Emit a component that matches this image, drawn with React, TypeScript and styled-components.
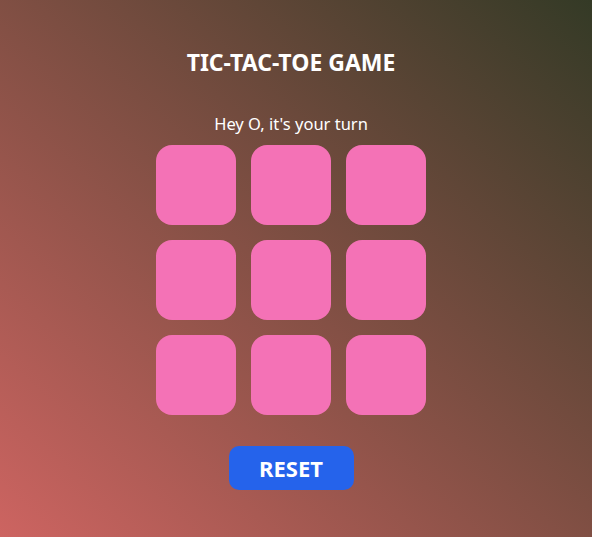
import React, { useState } from "react";
import styled, { createGlobalStyle } from "styled-components";

const Global = createGlobalStyle`
  html, body { margin: 0; padding: 0; }
  body {
    font-family: "Segoe UI", "Noto Sans", "Open Sans", sans-serif;
    color: #ffffff;
  }
`;

const Page = styled.div`
  min-height: 100vh;
  box-sizing: border-box;
  background: linear-gradient(to top right, #cd6461, #343a26);
  display: flex;
  flex-direction: column;
  align-items: center;
  padding: 47px 10px 0 0;
`;

const Title = styled.h1`
  margin: 0;
  font-size: 23px;
  font-weight: 700;
  line-height: 30px;
`;

const Status = styled.p`
  margin: 36px 0 10px;
  font-size: 16.5px;
  line-height: 22px;
`;

const Board = styled.div`
  display: grid;
  grid-template-columns: repeat(3, 80px);
  grid-auto-rows: 80px;
  gap: 15px;
`;

const Cell = styled.button`
  border: none;
  padding: 0;
  border-radius: 16px;
  background: #f472b6;
  color: #fff;
  font-size: 40px;
  font-weight: 700;
  cursor: pointer;
`;

const Reset = styled.button`
  margin-top: 31px;
  width: 125px;
  height: 44px;
  border: none;
  border-radius: 10px;
  background: #2563eb;
  color: #fff;
  font-family: inherit;
  font-size: 22px;
  font-weight: 700;
  padding: 0;
  cursor: pointer;
`;

export default function App() {
  const [cells, setCells] = useState<string[]>(Array(9).fill(""));
  const [turn, setTurn] = useState<"O" | "X">("O");
  const play = (i: number) => {
    if (cells[i]) return;
    const n = [...cells];
    n[i] = turn;
    setCells(n);
    setTurn(turn === "O" ? "X" : "O");
  };
  return (
    <>
      <Global />
      <Page>
        <Title>TIC-TAC-TOE GAME</Title>
        <Status>Hey {turn}, it's your turn</Status>
        <Board>
          {cells.map((c, i) => (
            <Cell key={i} onClick={() => play(i)}>
              {c}
            </Cell>
          ))}
        </Board>
        <Reset
          onClick={() => {
            setCells(Array(9).fill(""));
            setTurn("O");
          }}
        >
          RESET
        </Reset>
      </Page>
    </>
  );
}
